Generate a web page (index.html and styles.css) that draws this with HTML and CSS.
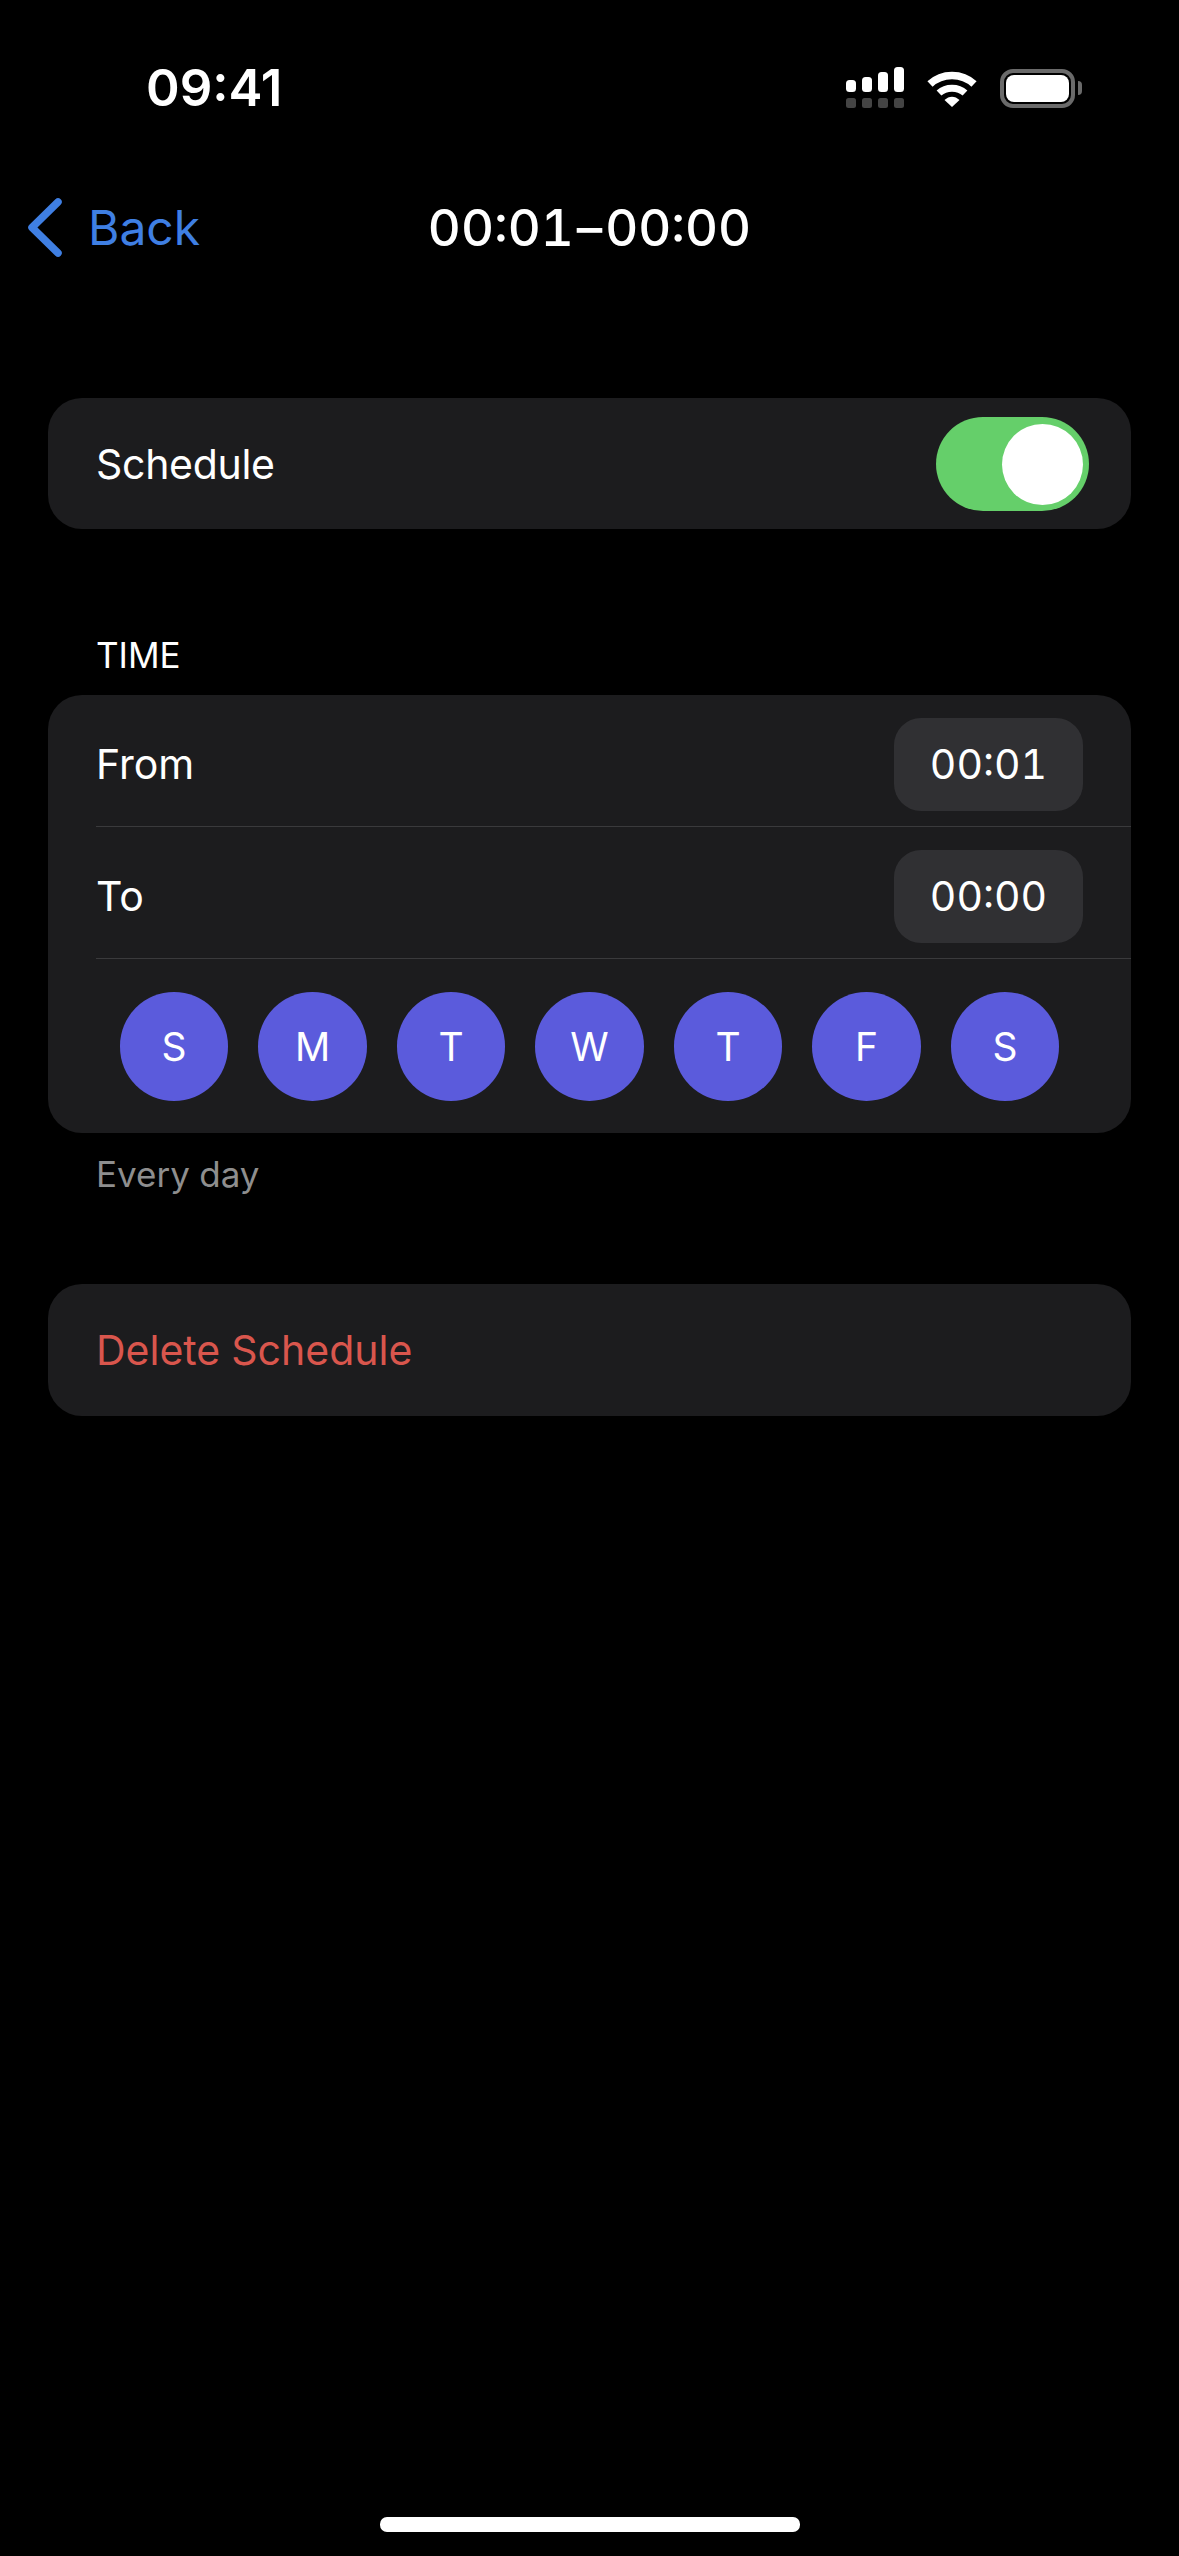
FILE: index.html
```html
<!DOCTYPE html>
<html lang="en">
<head>
    <meta charset="UTF-8">
    <meta name="viewport" content="width=device-width, initial-scale=1.0">
    <title>Schedule</title>
    <link rel="stylesheet" href="styles.css">
</head>
<body>
    <div class="status-bar">
        <span class="clock">09:41</span>
        <div class="status-icons">
            <svg class="signal" width="58" height="41" viewBox="0 0 58 41">
                <rect x="0" y="13" width="10" height="12" rx="3.5" fill="#fff"/>
                <rect x="16" y="10" width="10" height="15" rx="3.5" fill="#fff"/>
                <rect x="32" y="5" width="10" height="20" rx="3.5" fill="#fff"/>
                <rect x="48" y="0" width="10" height="25" rx="3.5" fill="#fff"/>
                <rect x="0" y="31" width="10" height="10" rx="2.5" fill="#444"/>
                <rect x="16" y="31" width="10" height="10" rx="2.5" fill="#444"/>
                <rect x="32" y="31" width="10" height="10" rx="2.5" fill="#444"/>
                <rect x="48" y="31" width="10" height="10" rx="2.5" fill="#444"/>
            </svg>
            <svg class="wifi" width="50" height="38" viewBox="0 0 50 38">
                <path d="M3 15 C15 3.500 35 3.500 47 15" fill="none" stroke="#fff" stroke-width="7.500"/>
                <path d="M12 24 C19 17.500 31 17.500 38 24" fill="none" stroke="#fff" stroke-width="7"/>
                <path d="M17.500 31 C22 26.500 28 26.500 32.500 31 L25 38 Z" fill="#fff"/>
            </svg>
            <div class="battery">
                <div class="battery-level"></div>
            </div>
            <div class="battery-nub"></div>
        </div>
    </div>

    <header class="nav-bar">
        <a class="back-link" href="#">
            <svg class="chevron" width="35" height="59" viewBox="0 0 35 59">
                <path d="M31 4 L5 29.500 L31 55" fill="none" stroke="#3f7fe3" stroke-width="7.500" stroke-linecap="round" stroke-linejoin="round"/>
            </svg>
            <span>Back</span>
        </a>
        <h1>00:01<span class="dash">–</span>00:00</h1>
    </header>

    <main>
        <section class="card row schedule-row">
            <span>Schedule</span>
            <div class="toggle"><div class="knob"></div></div>
        </section>

        <h2 class="section-label">TIME</h2>
        <section class="card">
            <div class="row time-row">
                <span>From</span>
                <div class="time-pill">00:01</div>
            </div>
            <div class="divider"></div>
            <div class="row time-row">
                <span>To</span>
                <div class="time-pill">00:00</div>
            </div>
            <div class="divider"></div>
            <div class="days">
                <div class="day">S</div>
                <div class="day">M</div>
                <div class="day">T</div>
                <div class="day">W</div>
                <div class="day">T</div>
                <div class="day">F</div>
                <div class="day">S</div>
            </div>
        </section>
        <p class="section-note">Every day</p>

        <section class="card row delete-row">
            <span>Delete Schedule</span>
        </section>
    </main>

    <div class="home-indicator"></div>
</body>
</html>
```

FILE: styles.css
```css
/* Reset some default styles */
body, h1, h2, p {
    margin: 0;
    padding: 0;
}

body {
    position: relative;
    width: 1179px;
    height: 2556px;
    overflow: hidden;
    background: #000;
    color: #fff;
    font-family: Inter, 'Noto Sans', sans-serif;
    font-size: 41px;
    font-feature-settings: "tnum";
}

/* Status bar */
.status-bar {
    display: flex;
    justify-content: space-between;
    align-items: flex-start;
    height: 168px;
    padding: 60px 97px 0 146px;
    box-sizing: border-box;
}

.clock {
    font-size: 51px;
    font-weight: 600;
    line-height: 56px;
    font-feature-settings: normal;
}

.status-icons {
    display: flex;
    align-items: flex-start;
    padding-top: 7px;
}

.signal {
    margin-right: 23px;
}

.wifi {
    margin-top: 2px;
    margin-right: 23px;
}

.battery {
    width: 75px;
    height: 39px;
    box-sizing: border-box;
    padding: 2px;
    border: 4px solid #6a6a6a;
    border-radius: 13px;
    margin-top: 2px;
}

.battery-level {
    height: 100%;
    background: #fff;
    border-radius: 8px;
}

.battery-nub {
    width: 4px;
    height: 14px;
    margin: 14px 0 0 3px;
    background: #6a6a6a;
    border-radius: 0 4px 4px 0;
}

/* Navigation */
.nav-bar {
    position: relative;
    display: flex;
    justify-content: center;
    align-items: center;
    height: 118px;
}

.nav-bar h1 {
    font-size: 51px;
    font-weight: 500;
}

.dash {
    margin: 0 3px;
}

.back-link {
    position: absolute;
    left: 27px;
    top: 0;
    height: 100%;
    display: flex;
    align-items: center;
    color: #3f7fe3;
    text-decoration: none;
    font-size: 48px;
}

.chevron {
    margin-right: 26px;
}

/* Cards */
main {
    padding: 112px 48px 0;
}

.card {
    background: #1c1c1e;
    border-radius: 34px;
    overflow: hidden;
}

.row {
    display: flex;
    justify-content: space-between;
    align-items: center;
    padding: 0 48px 0 48px;
}

.schedule-row {
    height: 131px;
    padding-right: 42px;
    letter-spacing: -0.3px;
}

.toggle {
    position: relative;
    width: 153px;
    height: 94px;
    background: #65cf6a;
    border-radius: 47px;
}

.knob {
    position: absolute;
    top: 7px;
    right: 6px;
    width: 81px;
    height: 81px;
    background: #fff;
    border-radius: 50%;
}

.section-label {
    margin: 105px 0 0 48px;
    height: 61px;
    font-size: 35px;
    font-weight: 400;
}

.time-row {
    height: 131px;
    padding-top: 7px;
    box-sizing: border-box;
}

.time-pill {
    width: 189px;
    height: 93px;
    display: flex;
    justify-content: center;
    align-items: center;
    background: #303033;
    border-radius: 27px;
}

.divider {
    height: 1px;
    margin-left: 48px;
    background: #3a3a3c;
}

.days {
    display: flex;
    justify-content: center;
    gap: 30px;
    padding: 33px 0 32px;
}

.day {
    width: 108.500px;
    height: 108.500px;
    display: flex;
    justify-content: center;
    align-items: center;
    background: #5b5bdc;
    border-radius: 50%;
    font-size: 39px;
}

.section-note {
    margin: 20px 0 0 48px;
    height: 131px;
    color: #8e8e8e;
    font-size: 35px;
}

.delete-row {
    height: 132px;
    color: #d9564d;
}

/* Home indicator */
.home-indicator {
    position: absolute;
    left: 380px;
    top: 2517px;
    width: 420px;
    height: 15px;
    background: #fff;
    border-radius: 7px;
}
```
